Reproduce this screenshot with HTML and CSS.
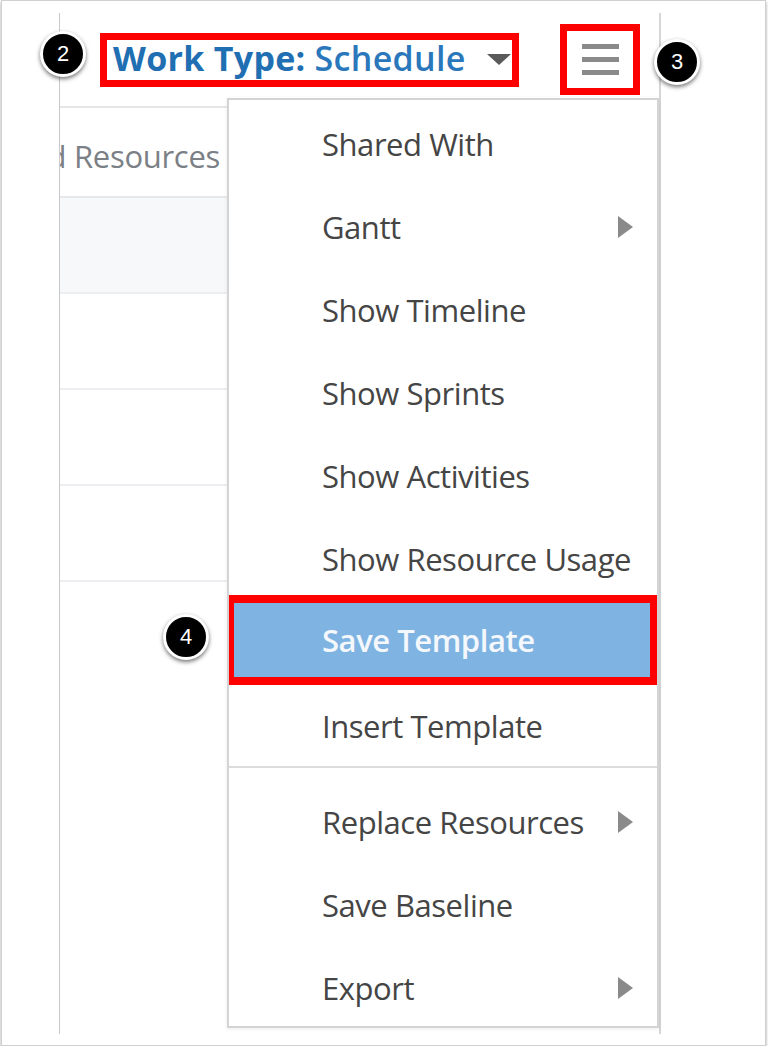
FILE: index.html
```html
<!DOCTYPE html>
<html lang="en">
<head>
<meta charset="utf-8">
<title>Work Type menu</title>
<link rel="stylesheet" href="styles.css">
</head>
<body>
<div class="frame">
  <div class="panel">
    <div class="toolbar">
      <div class="worktype annot">
        <span class="wt-label">Work Type:</span>
        <span class="wt-value">Schedule</span>
        <span class="caret"></span>
      </div>
      <div class="menu-btn annot">
        <span class="bar"></span>
        <span class="bar"></span>
        <span class="bar"></span>
      </div>
    </div>
    <div class="table">
      <div class="row head"><div class="cell"><span>Allocated Resources</span></div></div>
      <div class="row alt"></div>
      <div class="row"></div>
      <div class="row"></div>
      <div class="row"></div>
    </div>
    <div class="dropdown">
      <ul class="menu">
        <li class="item">Shared With</li>
        <li class="item has-sub">Gantt<span class="arrow"></span></li>
        <li class="item">Show Timeline</li>
        <li class="item">Show Sprints</li>
        <li class="item">Show Activities</li>
        <li class="item">Show Resource Usage</li>
        <li class="item active">Save Template</li>
        <li class="item">Insert Template</li>
        <li class="sep"></li>
        <li class="item has-sub">Replace Resources<span class="arrow"></span></li>
        <li class="item">Save Baseline</li>
        <li class="item has-sub">Export<span class="arrow"></span></li>
      </ul>
    </div>
  </div>
  <span class="badge b2">2</span>
  <span class="badge b3">3</span>
  <span class="badge b4">4</span>
</div>
</body>
</html>
```
FILE: styles.css
```css
* { box-sizing: border-box; }
html, body { margin: 0; padding: 0; background: #fff; }
body { font-family: "Open Sans", "Noto Sans", sans-serif; }

.frame {
  position: relative;
  margin-left: 1px;
  width: 765px;
  height: 1046px;
  border: 1px solid #d0d0d0;
  box-shadow: 0 2px 3px rgba(0,0,0,.35);
  padding: 12px 0 0 57px;
  background: #fff;
}

.panel {
  position: relative;
  width: 602px;
  height: 1021px;
  border-left: 1px solid #c9c9c9;
  border-right: 2px solid #d6d6d6;
}

.toolbar {
  display: flex;
  align-items: center;
  height: 95px;
  padding-left: 40px;
  border-bottom: 2px solid #e4e6e8;
}

.annot { border: 7px solid #ff0000; }

.worktype {
  display: flex;
  align-items: center;
  width: 419px;
  height: 54px;
  padding: 0 1px 3px 6px;
  color: #1f6fb2;
  font-size: 34px;
  white-space: nowrap;
  letter-spacing: 0.3px;
}
.wt-label { font-weight: 700; margin-right: 9px; }
.wt-value { font-weight: 600; color: #2a78bb; }
.caret {
  margin-left: auto;
  width: 0; height: 0;
  border-left: 12px solid transparent;
  border-right: 12px solid transparent;
  border-top: 11px solid #5a5a5a;
  margin-top: 3px;
}

.menu-btn {
  margin-left: 41px;
  width: 80px;
  height: 71px;
  display: flex;
  flex-direction: column;
  align-items: center;
  justify-content: center;
  gap: 8px;
}
.bar { display: block; width: 37px; height: 5px; background: #8a8a8a; }

.table { display: flex; flex-direction: column; }
.row { height: 96px; border-bottom: 2px solid #eceef1; }
.row.head { height: 90px; border-bottom-color: #e6e8eb; }
.row.alt { background: #f7f8fa; }
.cell {
  width: 167px;
  height: 100%;
  overflow: hidden;
  display: flex;
  justify-content: flex-end;
  align-items: center;
  padding: 7px 7px 0 0;
  white-space: nowrap;
  font-size: 31px;
  color: #7b8086;
  letter-spacing: -0.3px;
}

.dropdown {
  position: absolute;
  left: 167px;
  top: 85px;
  width: 432px;
  height: 930px;
  overflow: hidden;
  background: #fff;
  border: 2px solid #d4d4d4;
  box-shadow: 0 1px 4px rgba(0,0,0,.08);
  z-index: 2;
}
.menu { list-style: none; margin: 0; padding: 2px 0 0; }
.item {
  display: flex;
  align-items: center;
  height: 83px;
  padding: 0 24px 0 93px;
  font-size: 31px;
  color: #454545;
  letter-spacing: -0.45px;
  white-space: nowrap;
}
.arrow {
  margin-left: auto;
  width: 0; height: 0;
  border-left: 15px solid #8a8a8a;
  border-top: 11px solid transparent;
  border-bottom: 11px solid transparent;
}
.item.active {
  height: 74px;
  margin: 3px 7px 8px 5px;
  padding-left: 88px;
  background: #7fb3e2;
  color: #f4f8fc;
  font-weight: 600;
  outline: 8px solid #ff0000;
}
.item.active + .item { height: 81px; }
.sep { height: 2px; background: #dcdcdc; margin: 0 0 12px; }

.badge {
  position: absolute;
  width: 46px;
  height: 46px;
  border-radius: 50%;
  background: #000;
  border: 3px solid #fff;
  box-shadow: 0 2px 4px rgba(0,0,0,.55);
  color: #fff;
  font-family: "Liberation Sans", Arial, sans-serif;
  font-size: 22px;
  display: flex;
  align-items: center;
  justify-content: center;
  z-index: 3;
}
.b2 { left: 38px; top: 30px; }
.b3 { left: 652px; top: 38px; }
.b4 { left: 161px; top: 613px; }
```
